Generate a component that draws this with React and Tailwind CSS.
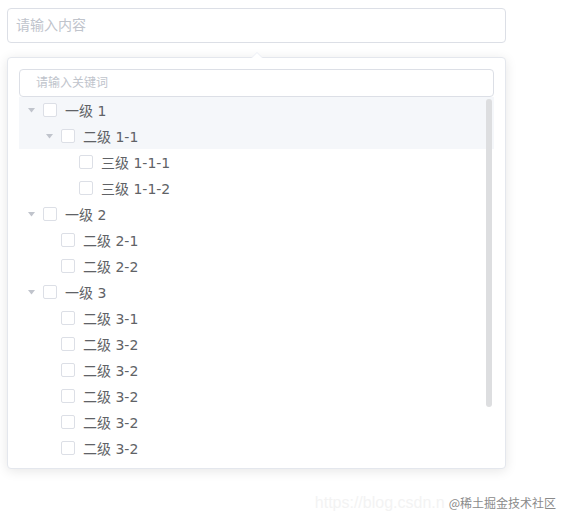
import React from 'react'

const font = { fontFamily: '"DejaVu Sans", "Noto Sans CJK SC", sans-serif' }

const tree = [
  { label: '一级 1', level: 0, arrow: true, hl: true },
  { label: '二级 1-1', level: 1, arrow: true, hl: true },
  { label: '三级 1-1-1', level: 2 },
  { label: '三级 1-1-2', level: 2 },
  { label: '一级 2', level: 0, arrow: true },
  { label: '二级 2-1', level: 1 },
  { label: '二级 2-2', level: 1 },
  { label: '一级 3', level: 0, arrow: true },
  { label: '二级 3-1', level: 1 },
  { label: '二级 3-2', level: 1 },
  { label: '二级 3-2', level: 1 },
  { label: '二级 3-2', level: 1 },
  { label: '二级 3-2', level: 1 },
  { label: '二级 3-2', level: 1 },
]

const indents = ['pl-[9px]', 'pl-[27px]', 'pl-[45px]']

function Row({ node }) {
  return (
    <div className={`flex items-center h-[26px] ${indents[node.level]} ${node.hl ? 'bg-[#f5f7fa]' : ''}`}>
      <span className="w-[15px] flex justify-start">
        {node.arrow && (
          <svg width="7" height="5" viewBox="0 0 7 5">
            <path d="M0 0 L7 0 L3.5 4.5 Z" fill="#c0c4cc" />
          </svg>
        )}
      </span>
      <span className="w-[14px] h-[14px] border border-[#dcdfe6] rounded-[2px] bg-white" />
      <span className="ml-[8px] pt-[2px] text-[14px] text-[#606266] leading-none">{node.label}</span>
    </div>
  )
}

export default function App() {
  return (
    <div className="relative w-[569px] h-[526px] bg-white overflow-hidden" style={font}>
      <div className="pt-[8px] pl-[7px]">
        <div className="w-[499px] h-[35px] border border-[#dcdfe6] rounded-[4px] flex items-center px-[8px] text-[14px] text-[#c0c4cc]">
          请输入内容
        </div>

        <div className="relative mt-[14px] w-[499px] h-[412px] bg-white border border-[#e4e7ed] rounded-[4px] shadow-[0_2px_12px_0_rgba(0,0,0,0.1)] p-[11px] pb-0">
          <span className="absolute -top-[6px] left-[243px] w-0 h-0 border-x-[6px] border-x-transparent border-b-[6px] border-b-[#ebeef5]" />
          <span className="absolute -top-[5px] left-[244px] w-0 h-0 border-x-[5px] border-x-transparent border-b-[5px] border-b-white" />

          <div className="h-[28px] border border-[#dcdfe6] rounded-[4px] flex items-center pl-[16px] text-[12px] text-[#c0c4cc]">
            请输入关键词
          </div>

          <div className="relative">
            {tree.map((n, i) => (
              <Row key={i} node={n} />
            ))}
            <span className="absolute top-[2px] right-[2px] w-[6px] h-[308px] rounded-[3px] bg-[#dddee0]" />
          </div>
        </div>
      </div>

      <div className="absolute right-[13px] bottom-[11px] flex items-center whitespace-nowrap">
        <span className="text-[16px] text-[#f3f3f3]" style={{ fontFamily: '"Liberation Sans", sans-serif' }}>
          https://blog.csdn.n
        </span>
        <span className="ml-[4px] text-[12px] text-[#8a8a8a]" style={{ fontFamily: '"Noto Sans CJK SC", sans-serif' }}>
          @稀土掘金技术社区
        </span>
      </div>
    </div>
  )
}
